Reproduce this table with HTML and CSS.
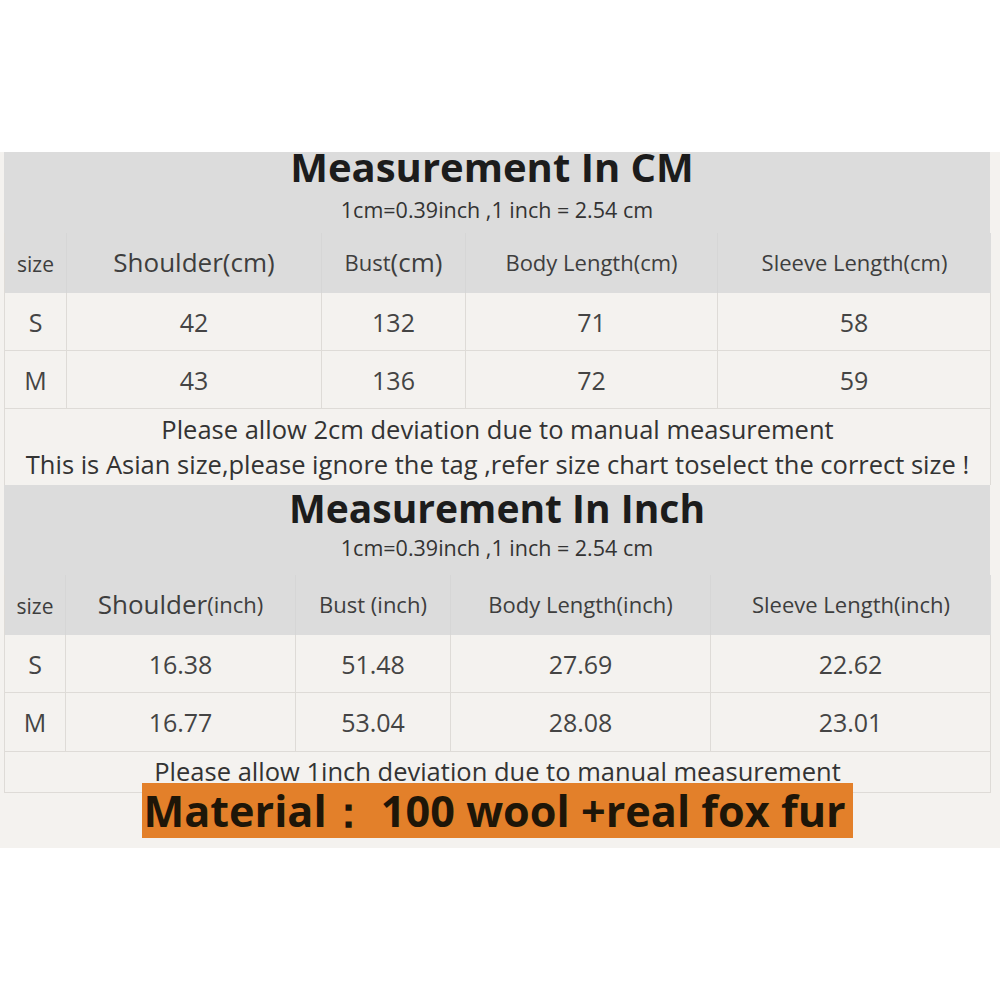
FILE: index.html
```html
<!DOCTYPE html>
<html>
<head>
<meta charset="utf-8">
<link rel="stylesheet" href="styles.css">
</head>
<body>
<div class="sheet">
  <div class="chart">
    <section class="block cm">
      <div class="head">
        <h2 class="title">Measurement In CM</h2>
        <p class="sub">1cm=0.39inch ,1 inch = 2.54 cm</p>
      </div>
      <div class="grid grid-cm">
        <div class="hc size">size</div>
        <div class="hc"><span class="big">Shoulder(cm)</span></div>
        <div class="hc">Bust<span class="big">(cm)</span></div>
        <div class="hc">Body Length(cm)</div>
        <div class="hc">Sleeve Length(cm)</div>

        <div class="c">S</div><div class="c">42</div><div class="c">132</div><div class="c">71</div><div class="c">58</div>
        <div class="c">M</div><div class="c">43</div><div class="c">136</div><div class="c">72</div><div class="c">59</div>

        <div class="note note-cm">
          <span>Please allow 2cm deviation due to manual measurement</span>
          <span>This is Asian size,please ignore the tag ,refer size chart toselect the correct size !</span>
        </div>
      </div>
    </section>

    <section class="block inch">
      <div class="head head-inch">
        <h2 class="title">Measurement In Inch</h2>
        <p class="sub">1cm=0.39inch ,1 inch = 2.54 cm</p>
      </div>
      <div class="grid grid-inch">
        <div class="hc size">size</div>
        <div class="hc"><span class="big">Shoulder</span>(inch)</div>
        <div class="hc">Bust (inch)</div>
        <div class="hc">Body Length(inch)</div>
        <div class="hc">Sleeve Length(inch)</div>

        <div class="c">S</div><div class="c">16.38</div><div class="c">51.48</div><div class="c">27.69</div><div class="c">22.62</div>
        <div class="c">M</div><div class="c">16.77</div><div class="c">53.04</div><div class="c">28.08</div><div class="c">23.01</div>

        <div class="note note-inch">
          <span>Please allow 1inch deviation due to manual measurement</span>
        </div>
      </div>
    </section>
  </div>
  <div class="banner-wrap">
    <div class="banner">Material：&nbsp;100 wool +real fox fur</div>
  </div>
</div>
</body>
</html>
```

FILE: styles.css
```css
html, body {
  margin: 0;
  padding: 0;
  background: #ffffff;
}

body {
  font-family: "Open Sans", "Noto Sans", "Liberation Sans", sans-serif;
  color: #3a3a3a;
}

.sheet {
  margin-top: 152px;
  height: 696px;
  background: #f4f2ef;
  padding: 0 10px 0 4px;
  box-sizing: border-box;
}

.chart {
  width: 986px;
}

.head {
  background: #dcdcdc;
  height: 81px;
  text-align: center;
}

.head-inch {
  height: 90px;
}

.title {
  margin: 0;
  font-size: 40px;
  font-weight: 700;
  line-height: 40px;
  color: #1c1c1c;
  padding-right: 10px;
  transform: translateY(-5px);
  height: 34px;
}

.head-inch .title {
  padding-right: 0;
  font-size: 39px;
  transform: none;
  height: auto;
  line-height: 46px;
  padding-top: 0;
}

.sub {
  margin: 0;
  font-size: 21.5px;
  line-height: 26px;
  padding-top: 11px;
  color: #333;
}

.head-inch .sub {
  padding-top: 4px;
}

.grid {
  display: grid;
  border-left: 1px solid #dedbd7;
}

.grid-cm {
  grid-template-columns: 62px 255px 144px 252px 273px;
  grid-template-rows: 60px 58px 58px 76px;
}

.grid-inch {
  grid-template-columns: 61px 230px 155px 260px 280px;
  grid-template-rows: 60px 58px 59px 41px;
}

.hc {
  background: #dcdcdc;
  display: flex;
  align-items: center;
  justify-content: center;
  font-size: 22px;
  color: #3e3e3e;
  border-right: 1px solid #d6d6d6;
  padding-bottom: 2px;
  box-sizing: border-box;
  white-space: nowrap;
}

.hc:nth-child(5) {
  border-right: none;
}

.hc .big {
  font-size: 26px;
}

.hc.size {
  font-size: 21px;
  padding-top: 2px;
  padding-bottom: 0;
}

.c {
  display: flex;
  align-items: center;
  justify-content: center;
  font-size: 25px;
  color: #444;
  border-right: 1px solid #dedbd7;
  border-bottom: 1px solid #dedbd7;
  box-sizing: border-box;
}

.note {
  grid-column: 1 / -1;
  display: flex;
  flex-direction: column;
  align-items: center;
  justify-content: center;
  border-right: 1px solid #dedbd7;
  border-bottom: 1px solid #dedbd7;
  box-sizing: border-box;
  font-size: 25.5px;
  color: #333;
  white-space: nowrap;
}

.note-cm {
  line-height: 35px;
  border-bottom: none;
}

.note-inch {
  justify-content: flex-start;
  line-height: 26px;
  padding-top: 6px;
}

.banner-wrap {
  display: flex;
  justify-content: center;
  margin-top: -10px;
}

.banner {
  background: #e3802a;
  color: #1e1608;
  font-weight: 700;
  font-size: 43.2px;
  line-height: 55px;
  height: 55px;
  padding: 0 0 0 2px;
  width: 711px;
  box-sizing: border-box;
  white-space: nowrap;
}
```
